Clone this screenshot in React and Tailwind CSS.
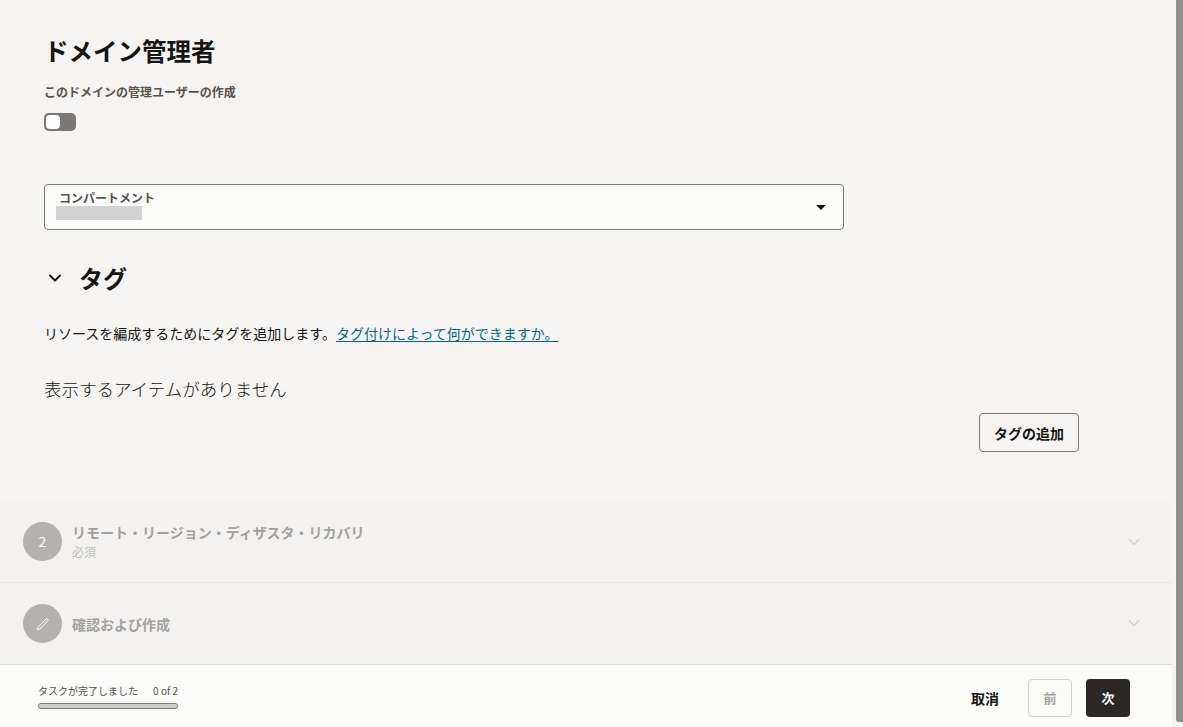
import { ChevronDown } from 'lucide-react';

const jp = "font-['Noto_Sans_CJK_JP','Noto_Sans',sans-serif]";

const Paso = ({ icon, titulo, sub, alto, borde, chevron }) => (
  <div className={`flex items-center pl-[23px] pr-[28px] ${alto} ${borde ? 'border-b border-[#e9e7e5]' : ''}`}>
    <div className="w-[39px] h-[39px] rounded-full bg-[#b4b2b0] flex items-center justify-center text-white text-sm">
      {icon}
    </div>
    <div className="ml-[10px] flex-1">
      <div className="text-sm font-bold text-[#a3a19f] leading-[20px]">{titulo}</div>
      {sub && <div className="mt-[2px] text-[12px] text-[#c0bebc] leading-[16px]">{sub}</div>}
    </div>
    <ChevronDown size={20} strokeWidth={1.5} className={`text-[#d3d1cf] ${chevron}`} />
  </div>
);

export default function App() {
  return (
    <div className={`h-[727px] w-[1183px] flex overflow-hidden bg-[#f5f4f2] ${jp}`}>
      <div className="w-[1172px] h-full flex flex-col">
        <div className="h-[500px] pl-[44px] pr-[93px] pt-[34px]">
          <h1 className="text-[24.5px] font-bold text-[#161513] leading-[34px]">ドメイン管理者</h1>
          <div className="mt-[15px] text-[12px] font-bold text-[#56524e] leading-[18px]">このドメインの管理ユーザーの作成</div>
          <div className="mt-[12px] w-[32px] h-[18px] rounded-[5px] bg-[#7a7875] p-[2px]">
            <div className="w-[14px] h-[14px] rounded-[4px] bg-white" />
          </div>
          <div className="mt-[53px] w-[800px] h-[46px] rounded-[4px] border border-[#7d7b78] bg-[#fbfbfa] pl-[11px] pr-[17px] flex items-center justify-between">
            <div className="pb-[4px]">
              <div className="pl-[3px] text-[12px] font-bold text-[#56524e] leading-[16px]">コンパートメント</div>
              <div className="w-[86px] h-[14px] bg-[#d0d2d3]" />
            </div>
            <div className="w-0 h-0 border-x-[5px] border-x-transparent border-t-[5px] border-t-[#161513]" />
          </div>
          <div className="mt-[30px] flex items-center">
            <ChevronDown size={20} strokeWidth={2.25} className="ml-[1px] text-[#161513]" />
            <h2 className="ml-[14px] text-[24px] font-bold text-[#161513] leading-[36px]">タグ</h2>
          </div>
          <p className="mt-[27px] text-sm text-[#161513] leading-[20px]">
            リソースを編成するためにタグを追加します。
            <a className="text-[#00688c] underline underline-offset-2">タグ付けによって何ができますか。</a>
          </p>
          <p className="mt-[33px] text-[17.5px] font-light text-[#161513] leading-[26px]">表示するアイテムがありません</p>
          <div className="flex justify-end mt-[11px]">
            <button className="w-[100px] h-[39px] rounded-[4px] border border-[#7d7b78] text-sm font-bold text-[#161513]">タグの追加</button>
          </div>
        </div>
        <div className="bg-[#f3f2f0] flex flex-col">
          <Paso alto="h-[83px]" borde chevron="mt-[1px]" icon="2" titulo="リモート・リージョン・ディザスタ・リカバリ" sub="必須" />
          <Paso
            alto="h-[81px]"
            chevron="-mt-[1px]"
            icon={
              <svg width="14" height="14" viewBox="0 0 14 14" fill="none" stroke="currentColor" strokeWidth="1" strokeLinejoin="round">
                <path d="M1.5 12.5 L2 10.2 L10.2 2 Q10.9 1.3 11.7 2.2 Q12.6 3 11.9 3.8 L3.8 12 Z" />
              </svg>
            }
            titulo="確認および作成"
          />
        </div>
        <div className="h-[63px] bg-[#fbfbfa] border-t border-[#dfdddb] flex items-center pl-[38px] pr-[42px]">
          <div className="w-[140px]">
            <div className="flex justify-between text-[10px] text-[#56524e] leading-[14px]">
              <span>タスクが完了しました</span>
              <span>0 of 2</span>
            </div>
            <div className="mt-[5px] h-[6px] rounded-full border border-[#7d7b78] bg-[#d0cfcd]" />
          </div>
          <div className="ml-auto flex items-center pt-[4px]">
            <button className="text-[14px] font-bold text-[#161513]">取消</button>
            <button className="ml-[29px] w-[44px] h-[38px] rounded-[4px] border border-[#d5d3d1] text-[13px] font-bold text-[#a3a19f]">前</button>
            <button className="ml-[14px] w-[44px] h-[38px] rounded-[4px] bg-[#2b2825] text-[13px] font-bold text-white">次</button>
          </div>
        </div>
      </div>
      <div className="w-[11px] h-full pl-[4px]">
        <div className="w-[7px] h-[722px] bg-[#8f8e8d] rounded-bl-[3px]" />
      </div>
    </div>
  );
}
